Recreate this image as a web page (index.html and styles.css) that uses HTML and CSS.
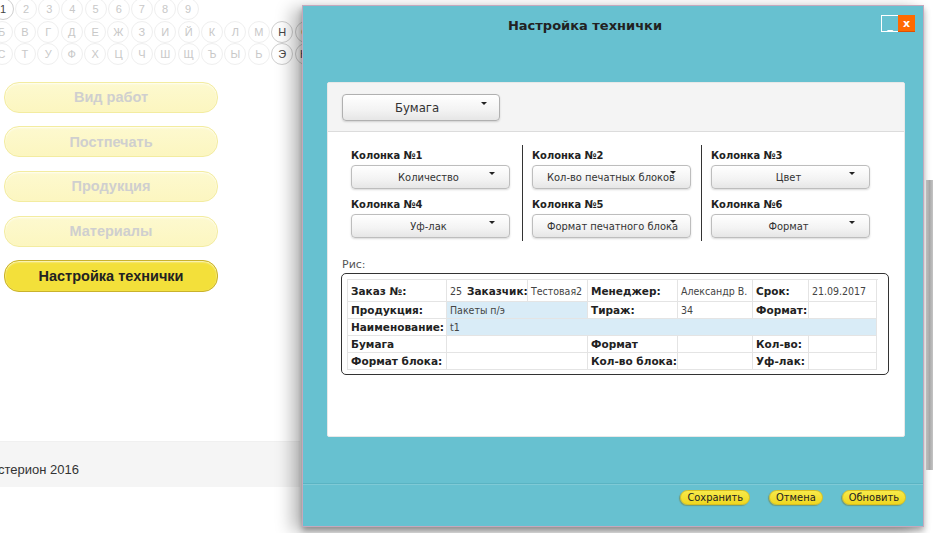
FILE: index.html
```html
<!DOCTYPE html>
<html lang="ru">
<head>
<meta charset="utf-8">
<title>Настройка технички</title>
<link rel="stylesheet" href="styles.css">
</head>
<body>
<div class="page">
  <div class="alpha">
    <div class="arow digits">
      <span class="c dark">1</span><span class="c">2</span><span class="c">3</span><span class="c">4</span><span class="c">5</span><span class="c">6</span><span class="c">7</span><span class="c">8</span><span class="c">9</span>
    </div>
    <div class="arow letters">
      <span class="c">Б</span><span class="c">В</span><span class="c">Г</span><span class="c">Д</span><span class="c">Е</span><span class="c">Ж</span><span class="c">З</span><span class="c">И</span><span class="c">Й</span><span class="c">К</span><span class="c">Л</span><span class="c">М</span><span class="c dark">Н</span><span class="c dark">О</span>
    </div>
    <div class="arow letters">
      <span class="c">С</span><span class="c">Т</span><span class="c">У</span><span class="c">Ф</span><span class="c">Х</span><span class="c">Ц</span><span class="c">Ч</span><span class="c">Ш</span><span class="c">Щ</span><span class="c">Ъ</span><span class="c">Ы</span><span class="c">Ь</span><span class="c dark">Э</span><span class="c dark">Ю</span>
    </div>
  </div>
  <nav class="nav">
    <div class="navbtn">Вид работ</div>
    <div class="navbtn">Постпечать</div>
    <div class="navbtn">Продукция</div>
    <div class="navbtn">Материалы</div>
    <div class="navbtn active">Настройка технички</div>
  </nav>
  <footer class="foot">стерион 2016</footer>
</div>
<div class="bgstrip"></div>

<div class="modal">
  <div class="mhead">
    <div class="mtitle">Настройка технички</div>
    <div class="wctrl">
      <span class="wmin">_</span><span class="wclose">x</span>
    </div>
  </div>
  <div class="panel">
    <div class="ptop">
      <div class="dd big">Бумага<i class="caret"></i></div>
    </div>
    <div class="cols">
      <div class="col">
        <div class="clabel">Колонка №1</div>
        <div class="dd">Количество<i class="caret"></i></div>
        <div class="clabel">Колонка №4</div>
        <div class="dd">Уф-лак<i class="caret"></i></div>
      </div>
      <div class="col sep">
        <div class="clabel">Колонка №2</div>
        <div class="dd long">Кол-во печатных блоков<i class="caret"></i></div>
        <div class="clabel">Колонка №5</div>
        <div class="dd long">Формат печатного блока<i class="caret"></i></div>
      </div>
      <div class="col sep">
        <div class="clabel">Колонка №3</div>
        <div class="dd">Цвет<i class="caret"></i></div>
        <div class="clabel">Колонка №6</div>
        <div class="dd">Формат<i class="caret"></i></div>
      </div>
    </div>
    <div class="ris">Рис:</div>
    <div class="tbox">
      <div class="tgrid">
        <div class="td b r1">Заказ №:</div>
        <div class="td r1 nb">25</div>
        <div class="td b r1">Заказчик:</div>
        <div class="td r1">Тестовая2</div>
        <div class="td b r1">Менеджер:</div>
        <div class="td r1">Александр В.</div>
        <div class="td b r1">Срок:</div>
        <div class="td r1">21.09.2017</div>

        <div class="td b">Продукция:</div>
        <div class="td blue s3">Пакеты п/э</div>
        <div class="td b">Тираж:</div>
        <div class="td">34</div>
        <div class="td b">Формат:</div>
        <div class="td"></div>

        <div class="td b">Наименование:</div>
        <div class="td blue s7">t1</div>

        <div class="td b">Бумага</div>
        <div class="td s3"></div>
        <div class="td b">Формат</div>
        <div class="td"></div>
        <div class="td b">Кол-во:</div>
        <div class="td"></div>

        <div class="td b">Формат блока:</div>
        <div class="td s3"></div>
        <div class="td b">Кол-во блока:</div>
        <div class="td"></div>
        <div class="td b">Уф-лак:</div>
        <div class="td"></div>
      </div>
    </div>
  </div>
  <div class="mfoot">
    <span class="ybtn">Сохранить</span>
    <span class="ybtn">Отмена</span>
    <span class="ybtn">Обновить</span>
  </div>
</div>
</body>
</html>
```

FILE: styles.css
```css
html, body {
  margin: 0;
  padding: 0;
  background: #fff;
  width: 933px;
  height: 533px;
  overflow: hidden;
}
body {
  font-family: "Liberation Sans", Arial, sans-serif;
  position: relative;
}
.page {
  width: 300px;
}
.alpha {
  padding-top: 0;
  display: flex;
  flex-direction: column;
}
.arow {
  display: flex;
  height: 22.5px;
}
.digits { margin-left: -8px; margin-top: -2px; }
.letters { margin-left: -9.5px; }
.c {
  flex: none;
  box-sizing: border-box;
  width: 22px;
  height: 22px;
  border: 1px solid #efefef;
  border-radius: 50%;
  display: flex;
  align-items: center;
  justify-content: center;
  font-family: "Liberation Sans", Arial, sans-serif;
  font-size: 11px;
  color: #c8c8c8;
  margin-right: 1.15px;
}
.letters .c { margin-right: 1.4px; }
.c.dark {
  color: #444;
  border-color: #cfcfcf;
}
.nav {
  margin-top: 16px;
  display: flex;
  flex-direction: column;
  gap: 13.7px;
  padding-left: 4px;
}
.navbtn {
  width: 212px;
  height: 29px;
  border: 1px solid #f3eca0;
  border-radius: 15px;
  background: linear-gradient(#fdf9cf, #fcf6c0);
  color: #cfcfcf;
  font-weight: bold;
  font-size: 14.5px;
  display: flex;
  align-items: center;
  justify-content: center;
  box-shadow: inset 0 1px 2px rgba(255,255,255,0.8);
}
.navbtn.active {
  background: #f3e03a;
  border-color: #c9b22c;
  color: #222;
  height: 30px;
}
.foot {
  margin-top: 149px;
  height: 46px;
  box-sizing: border-box;
  background: #f5f5f5;
  border-top: 1px solid #f0f0f0;
  display: flex;
  align-items: center;
  padding-top: 9px;
  margin-left: -2px;
  font-size: 13px;
  color: #333;
  width: 302px;
}
.bgstrip {
  position: absolute;
  left: 926px;
  top: 180px;
  width: 7px;
  height: 290px;
  background: linear-gradient(90deg, #bbb, #888 50%, #aaa);
  opacity: 0.7;
}

.modal {
  position: absolute;
  left: 302px;
  top: 5px;
  width: 620px;
  height: 520px;
  background: #67c1d0;
  border: 1px solid #c4a9bd;
  box-shadow: -10px 4px 16px rgba(0,0,0,0.28), 0 4px 6px rgba(0,0,0,0.3);
  display: flex;
  flex-direction: column;
  font-family: "DejaVu Sans", Verdana, sans-serif;
}
.mhead {
  height: 76px;
  position: relative;
}
.mtitle {
  text-align: center;
  font-weight: bold;
  font-size: 13px;
  color: #222;
  padding-top: 12px;
  padding-right: 56px;
}
.wctrl {
  position: absolute;
  right: 8px;
  top: 9px;
  display: flex;
}
.wmin, .wclose {
  width: 17px;
  height: 17px;
  box-sizing: border-box;
  color: #fff;
  font-size: 11px;
  font-weight: bold;
  display: flex;
  justify-content: center;
}
.wmin {
  border: 1px solid #fff;
  border-right: none;
  align-items: flex-end;
  line-height: 12px;
}
.wclose {
  background: #ff6a00;
  align-items: center;
  border-bottom: 1px solid #e05000;
}
.panel {
  margin-left: 24px;
  margin-right: 18px;
  height: 355px;
  background: #fff;
  border: 1px solid #e8e8e8;
  border-radius: 2px;
  box-sizing: border-box;
}
.ptop {
  height: 49px;
  background: #f4f4f4;
  border-bottom: 1px solid #dcdcdc;
  box-sizing: border-box;
  padding: 11px 0 0 14px;
}
.dd {
  position: relative;
  width: 159px;
  height: 24px;
  box-sizing: border-box;
  border: 1px solid #bdbdbd;
  border-radius: 4px;
  background: linear-gradient(#ffffff, #f3f3f3 60%, #e6e6e6);
  box-shadow: 0 1px 2px rgba(0,0,0,0.15);
  font-family: "DejaVu Sans Condensed", "DejaVu Sans", sans-serif;
  font-stretch: condensed;
  font-size: 11px;
  color: #333;
  display: flex;
  align-items: center;
  justify-content: center;
  white-space: nowrap;
  padding-right: 4px;
}
.dd.long {
  justify-content: flex-start;
  padding-left: 14px;
  padding-right: 0;
}
.dd.big {
  width: 158px;
  height: 27px;
  font-size: 13px;
  border-color: #b0b0b0;
  padding-right: 8px;
}
.caret {
  position: absolute;
  right: 14px;
  top: 6px;
  width: 0;
  height: 0;
  border-left: 3px solid transparent;
  border-right: 3px solid transparent;
  border-top: 3px solid #222;
}
.dd.long .caret { right: 14px; top: 5px; }
.dd.big .caret { right: 12px; top: 7px; }
.cols {
  display: flex;
  padding-left: 14px;
  margin-top: 13px;
}
.col {
  width: 179px;
  box-sizing: border-box;
  padding-left: 9px;
  padding-top: 4px;
  padding-bottom: 3px;
}
.col.sep {
  border-left: 1px solid #333;
}
.col:first-child { width: 180px; }
.clabel {
  font-family: "DejaVu Sans Condensed", "DejaVu Sans", sans-serif;
  font-stretch: condensed;
  font-weight: bold;
  font-size: 11px;
  color: #222;
  height: 16px;
  line-height: 13px;
}
.dd + .clabel { margin-top: 9px; }
.ris {
  margin-top: 17px;
  padding-left: 14px;
  font-size: 11px;
  color: #555;
  height: 13px;
}
.tbox {
  margin: 2px 0 0 13px;
  width: 548px;
  height: 102px;
  box-sizing: border-box;
  border: 1px solid #333;
  border-radius: 5px;
  padding: 5px 0 0 5px;
}
.tgrid {
  display: grid;
  grid-template-columns: 99px 17px 64px 60px 90px 75px 56px 68px;
  grid-auto-rows: 17px;
  grid-template-rows: 22px;
  border-top: 1px solid #e4e4e4;
  border-left: 1px solid #e4e4e4;
  width: 530px;
}
.td {
  border-right: 1px solid #e4e4e4;
  border-bottom: 1px solid #e4e4e4;
  font-family: "DejaVu Sans Condensed", "DejaVu Sans", sans-serif;
  font-stretch: condensed;
  font-size: 10.5px;
  color: #444;
  padding-left: 3px;
  display: flex;
  align-items: center;
  white-space: nowrap;
  overflow: hidden;
}
.td.b {
  font-family: "DejaVu Sans", Verdana, sans-serif;
  font-stretch: normal;
  font-weight: bold;
  color: #222;
}
.td.nb { border-right: none; }
.td.blue { background: #d9ecf7; }
.s3 { grid-column: span 3; }
.s7 { grid-column: span 7; }
.mfoot {
  margin-top: 47px;
  border-top: 1px solid #7fcad6;
  box-shadow: 0 -1px 0 #5ab4c3;
  display: flex;
  justify-content: flex-end;
  gap: 19px;
  padding: 5px 17px 0 0;
}
.ybtn {
  height: 15px;
  box-sizing: border-box;
  background: linear-gradient(#f8ea4a, #efd720);
  border: 1px solid #d9c020;
  border-radius: 8px;
  font-family: "DejaVu Sans Condensed", "DejaVu Sans", sans-serif;
  font-stretch: condensed;
  font-size: 11px;
  color: #222;
  padding: 0 6px;
  display: flex;
  align-items: center;
  box-shadow: -1px 1px 1px rgba(120,100,0,0.4);
}
```
